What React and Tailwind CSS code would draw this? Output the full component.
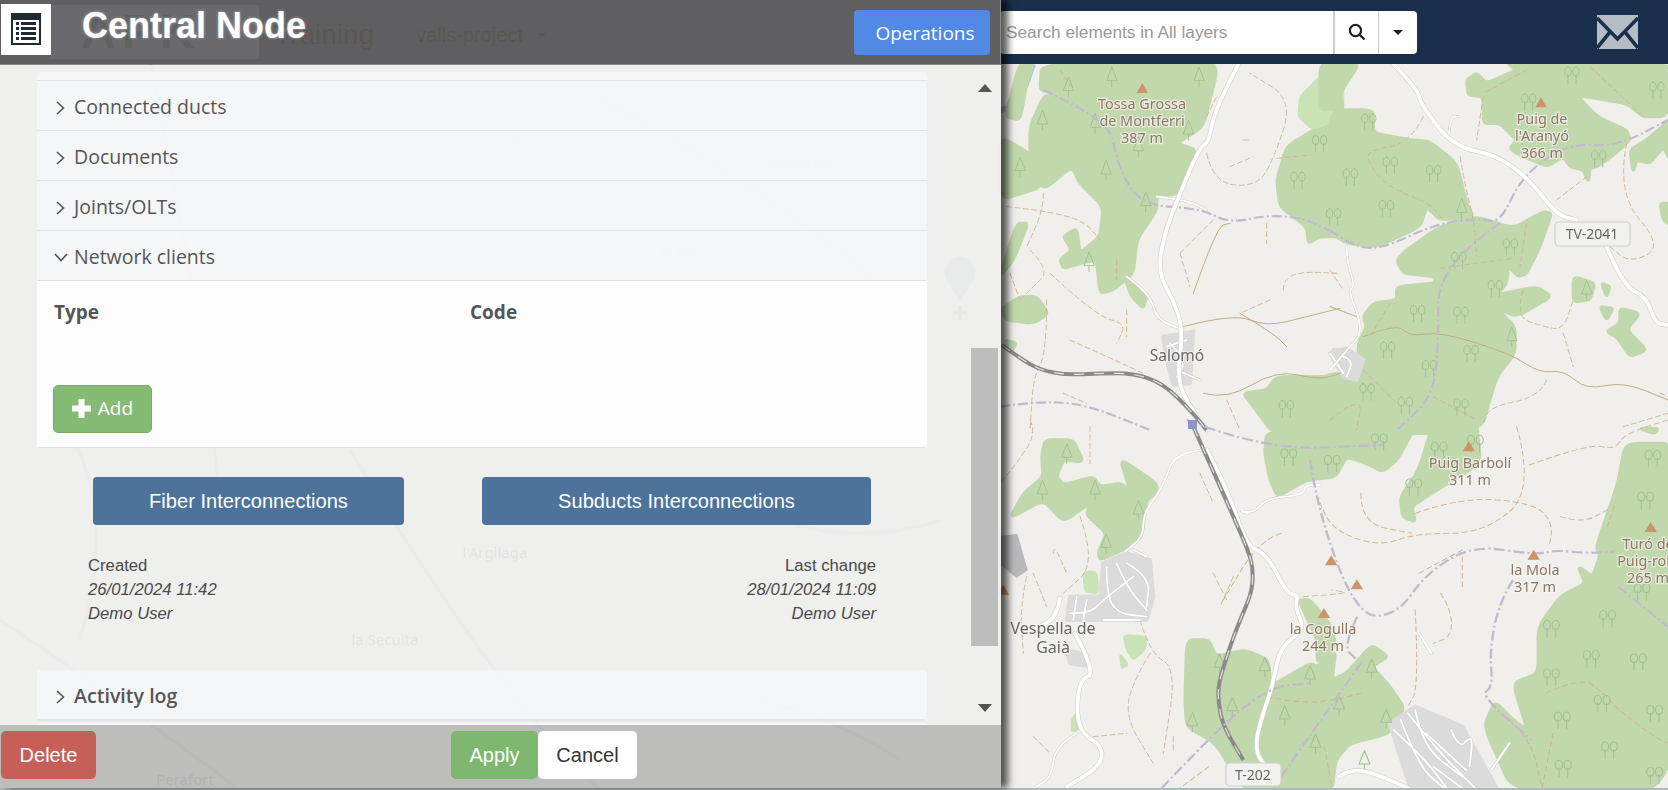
const FOREST = "#c1d8ad";

// map layers are traced per region, each view maps its own coordinates to the page
const views = [
  {
    t: "translate(1000 60) scale(0.3333)",
    forests: [
      "125,12 640,8 650,40 610,200 530,250 590,270 540,400 470,410 470,450 410,540 400,640 340,690 300,700 290,600 240,610 190,625 180,600 215,570 190,530 230,505 240,580 300,530 310,440 240,370 215,320 130,390 90,310 90,200 130,110 170,100 120,90",
      "60,8 100,8 80,70 60,180 15,170",
      "0,230 90,280 130,380 0,420",
      "50,490 85,490 40,600 0,650",
      "60,710 110,710 145,760 100,790 20,780 0,750",
      "15,840 50,850 30,880",
      "375,655 440,705 430,745 395,710",
      "940,210 1030,170 1030,530 960,530 925,550 920,500 840,440 830,360 860,260",
      "730,1000 800,990 830,950 1030,950 1030,1120 820,1120 760,1040",
    ],
    light: ["900,110 960,50 1030,10 1030,170 940,210 895,170"],
    built: ["490,830 580,815 570,970 520,975 500,900", "1000,870 1030,870 1030,920 1000,900"],
    tan: [
      "130,400 130,450 80,560", "20,440 120,450 250,480 300,540", "90,570 150,630 100,680 60,720",
      "150,640 290,770 380,790 350,850", "210,840 300,880 430,940", "140,720 140,880 100,950 90,1110",
      "620,280 640,370 770,380 820,300 880,120 750,40", "690,320 760,290", "730,240 745,240",
      "540,580 570,680", "640,480 540,580", "800,490 800,550", "850,690 850,660 900,635 1020,640",
      "810,720 720,760", "830,295 930,285", "620,170 650,110", "180,30 220,90", "350,600 350,660",
      "380,750 380,830", "190,1000 260,1030", "680,1020 720,1110", "30,640 60,720",
    ],
    brown: ["550,800 700,760 800,800 920,770 1020,745", "580,700 650,500 690,490", "610,1000 680,1020 830,930 960,960 1020,940", "720,760 820,820 860,860"],
    bounds: ["130,90 330,180 350,310 420,435 600,445 690,490 800,465 920,475 1020,530", "0,1040 100,1025 250,1030 450,1110"],
    roads: ["715,12 690,60 640,170 625,250 600,260 540,400 490,530 475,640 520,720 550,810 530,960 575,1050 620,1110"],
    lanes: ["380,650 450,700 470,780 550,810", "470,410 560,420 620,450", "500,860 560,840", "530,930 600,960", "510,850 560,900 530,950", "990,880 1030,940"],
    rail: ["5,855 60,895 120,930 200,945 300,940 400,940 490,970 580,1060 620,1110"],
    pines: [[335, 50], [205, 80], [127, 180], [60, 320], [318, 330], [285, 190], [565, 210], [597, 50], [437, 425], [267, 605], [415, 260]],
    trees: [[958, 250], [893, 360], [1000, 470], [858, 1045]],
    peaks: [[427, 85]],
  },
  {
    t: "translate(1330 60) scale(0.3333)",
    forests: [
      "0,150 130,150 130,220 245,240 300,245 380,310 410,430 430,470 330,480 290,440 270,500 140,560 50,550 -30,500",
      "-30,8 90,8 30,100 40,145 -30,150",
      "200,600 230,570 330,500 440,470 550,505 640,455 665,460 630,560 590,640 565,650 535,620 530,670 500,705 620,680 665,710 560,770 500,745 555,800 555,880 500,950 450,1120 -30,1120 -30,950 85,930 85,850 110,800 100,770 130,730 200,720 200,680 310,670 320,650 220,640",
      "410,60 440,40 470,70 560,30 530,8 1030,8 1030,130 1000,170 940,170 890,130 740,105 800,170 890,210 900,240 845,290 800,320 780,325 775,365 760,330 720,320 700,290 650,320 560,280 540,265 560,240 510,190 460,190 460,110 415,105",
      "900,270 950,240 1030,170 1030,320 1000,260 960,310 920,300 910,335",
      "730,650 795,670 780,720 730,725",
      "815,670 840,680 830,710",
      "810,740 850,745 830,780",
      "870,745 930,760 890,810 950,870 900,890 860,830 830,815 870,790",
      "990,430 1030,430 1030,500 1000,480",
    ],
    light: [],
    built: ["0,880 50,865 100,900 80,960 40,950"],
    tan: [
      "280,170 240,250 120,270 110,300 170,380 300,430 340,480", "390,290 410,400 430,470 440,590", "330,625 550,595",
      "460,110 440,240", "680,420 770,350", "890,250 860,400 1000,560 900,610 840,560", "590,30 460,100", "780,20 940,170",
      "580,690 555,770 640,800 700,810 730,720", "700,820 730,920", "650,960 630,1010 480,1040 460,1090", "100,930 200,1030",
      "0,1080 100,1000 80,1110", "180,730 120,830", "310,1010 440,1080", "880,1100 1014,1060", "590,490 570,620",
      "0,630 40,690", "990,1000 1014,1010",
    ],
    brown: ["100,830 200,790 240,830 330,815 540,880 630,940 700,930 770,990 880,965 1014,1020", "0,740 80,770"],
    bounds: [
      "0,510 60,555 150,570 320,490 450,475 510,490 575,350 710,250 860,260 1014,180",
      "510,490 325,615 325,850 310,1010 200,1110",
    ],
    roads: ["190,12 265,90 270,130 370,260 500,285 600,360 680,465 740,480", "830,560 880,680 950,710 975,790 1014,795"],
    lanes: ["355,240 360,170 385,170", "50,560 50,600 75,680 55,690 90,780 90,830 60,860", "60,860 0,930", "40,890 70,900 50,950"],
    rail: [],
    pines: [[395, 445], [545, 830], [770, 690]],
    trees: [[115, 185], [180, 315], [60, 350], [310, 340], [168, 445], [595, 125], [725, 45], [980, 90], [540, 560], [385, 600], [495, 685], [262, 760], [392, 765], [172, 870], [422, 880], [298, 925], [110, 995], [225, 1035], [392, 1040], [805, 295]],
    peaks: [[633, 128]],
  },
  {
    t: "translate(1000 420) scale(0.3333)",
    forests: [
      "135,60 220,60 250,125 190,120 170,170 190,195 280,170 300,200 360,190 390,210 360,115 470,190 470,220 440,240 425,350 390,380 300,420 295,395 320,340 260,285 270,250 190,305 130,240 30,295 70,220 130,170 125,110",
    ],
    light: ["250,455 290,455 295,520 255,515", "370,645 440,650 435,690 400,720 380,690", "360,700 385,735 365,745", "215,900 235,870 235,930 215,935"],
    built: ["310,430 380,400 450,420 460,530 440,600 330,600 200,600 210,530 300,530", "200,690 240,700 270,740 210,730"],
    grey: ["0,350 50,345 80,450 50,470 0,430"],
    tan: [
      "90,0 110,40 50,130 0,190", "240,290 290,430 190,520", "160,400 160,370 200,460", "100,460 140,560", "80,470 60,560 70,700",
      "420,600 450,700 530,745 490,1000", "450,700 390,800 380,900 460,1030", "640,460 680,540", "100,950 150,1000", "280,950 380,940",
      "600,160 640,250", "270,20 270,130", "700,470 660,560", "520,950 520,990",
    ],
    brown: [],
    bounds: [],
    roads: [
      "620,90 680,200 740,380 800,400 860,520 895,525 885,560 915,630 840,680 820,790 770,940 770,1000 790,1030",
      "225,640 290,760 235,780 230,930 310,980 300,1040 200,1100",
      "180,535 170,590 120,620",
    ],
    lanes: [
      "615,90 525,95 490,200 430,280 430,350 375,395", "745,280 710,270 760,280 800,235 910,225 915,195 960,195",
      "230,940 165,980 155,1070 110,1100",
      "320,440 320,520 350,580 440,590", "350,430 380,500 440,570", "400,390 440,410", "380,430 450,470 440,560",
      "210,580 270,580 310,540 400,470", "230,530 220,600", "260,540 250,600", "310,600 420,600",
    ],
    rail: ["580,20 660,200 745,390 760,450 755,520 720,600 690,680 655,790 655,850 670,920 730,1020"],
    pines: [[200, 100], [127, 210], [285, 210], [415, 270], [318, 370]],
    trees: [],
    peaks: [[10, 510]],
  },
  {
    t: "translate(1100 400) scale(0.3623 0.3333)",
    forests: [
      "1450,130 1590,130 1590,1175 1140,1175 1060,980 1090,905 1140,960 1180,990 1140,850 1210,820 1210,680 1270,590 1340,550 1320,500 1360,530 1380,470 1370,440 1430,250",
      "470,-10 1050,-10 1040,80 1050,190 900,290 860,320 870,365 835,350 830,290 880,210 920,70 880,60 820,180 780,215 735,190 680,170 650,230 570,240 490,290 470,240 455,160 460,100 560,85 640,60 500,-10",
      "240,720 300,720 320,770 400,750 465,780 470,860 580,790 600,800 650,750 640,840 680,820 750,735 795,770 750,800 800,860 840,925 800,1000 690,1030 650,1080 640,1175 400,1175 320,1030 240,980 235,900",
      "550,600 580,600 640,680 650,740 600,790 600,720 570,650",
      "1490,85 1540,85 1530,100",
    ],
    light: [],
    built: ["800,970 870,920 1000,980 1100,1175 860,1175"],
    tan: [
      "1185,195 1350,130 1420,150 1450,100 1568,60", "1150,80 1200,270 1060,400 870,400 770,440 640,390 600,290",
      "870,340 1000,290 1200,310 1250,370 1240,440", "1270,350 1330,370 1400,330", "720,280 720,370 860,400", "880,520 1000,450",
      "870,630 880,860 850,920", "940,580 970,630 970,710 920,730", "1130,960 1190,1020 1220,1165", "1230,880 1330,830 1390,880 1430,930 1530,1010 1568,1030",
      "460,890 550,910 650,900 720,880", "500,400 440,420 340,600", "560,590 700,580 640,570", "1000,470 1000,560", "1420,320 1400,380",
      "1250,1000 1220,1165", "620,1040 640,1165", "300,1100 220,1165",
    ],
    brown: [],
    bounds: [
      "240,60 450,150 780,135", "580,180 600,330 710,650 820,645 900,520 1030,435 1200,465 1260,450 1340,460 1420,455",
      "1140,540 1100,610 1075,760 1085,860 1050,885 1190,1020", "710,650 670,740 710,780", "500,1130 720,790",
      "170,1165 330,980 470,860 580,850", "1430,560 1568,680",
    ],
    roads: ["660,1130 700,1100 800,1140 850,1165"],
    lanes: [
      "880,700 915,760", "830,960 880,1100 950,1165", "870,930 890,1040 1000,1130", "970,990 990,1050 1030,1000 1020,1100",
      "920,1100 1000,1165", "1130,1030 1080,1110", "810,990 900,1080 960,1170", "850,940 930,1050 1040,1170", "900,1000 1010,1110",
    ],
    rail: [],
    pines: [[255, 965], [365, 920], [510, 945], [595, 1030], [730, 1080], [790, 955], [660, 915], [580, 825], [750, 805], [455, 800], [330, 790]],
    trees: [[1035, 130], [935, 150], [865, 260], [1525, 175], [1505, 300], [1400, 655], [1245, 685], [1355, 775], [1485, 785], [1245, 830], [1385, 910], [1275, 960], [1530, 940], [1405, 1050], [1278, 1105], [1530, 1125], [1495, 575], [640, 190], [520, 170], [770, 125]],
    peaks: [[1018, 140], [638, 482], [709, 554], [618, 640], [1197, 465], [1520, 382]],
  },
];

const labels = [
  { x: 1142, y: 109, s: "Tossa Grossa", peak: true },
  { x: 1142, y: 126, s: "de Montferri", peak: true },
  { x: 1142, y: 143, s: "387 m", peak: true },
  { x: 1177, y: 361, s: "Salomó", size: 15.5 },
  { x: 1542, y: 124, s: "Puig de", peak: true },
  { x: 1542, y: 141, s: "l'Aranyó", peak: true },
  { x: 1542, y: 158, s: "366 m", peak: true },
  { x: 1470, y: 468, s: "Puig Barbolí", peak: true },
  { x: 1470, y: 485, s: "311 m", peak: true },
  { x: 1535, y: 575, s: "la Mola", peak: true },
  { x: 1535, y: 592, s: "317 m", peak: true },
  { x: 1648, y: 549, s: "Turó de", peak: true },
  { x: 1648, y: 566, s: "Puig-roig", peak: true },
  { x: 1648, y: 583, s: "265 m", peak: true },
  { x: 1323, y: 634, s: "la Cogulla", peak: true },
  { x: 1323, y: 651, s: "244 m", peak: true },
  { x: 1053, y: 634, s: "Vespella de", size: 16 },
  { x: 1053, y: 653, s: "Gaià", size: 16 },
];

const ghostLabels = [
  { x: 527, y: 140, s: "Nulles" },
  { x: 800, y: 168, s: "Vilallonga" },
  { x: 680, y: 258, s: "El Pla" },
  { x: 135, y: 298, s: "T-223" },
  { x: 645, y: 412, s: "Renau" },
  { x: 523, y: 420, s: "TV-2032" },
  { x: 495, y: 558, s: "l'Argilaga" },
  { x: 385, y: 645, s: "la Secuita" },
  { x: 185, y: 785, s: "Perafort" },
];

const ghostLines = [
  "M0 620 Q120 700 240 790", "M150 64 Q200 300 220 500", "M600 100 Q760 180 900 300", "M350 450 Q500 700 600 790",
  "M760 700 Q840 720 900 760", "M60 420 Q120 500 80 640", "M420 280 Q480 380 620 420", "M700 480 Q820 560 940 520",
];

const toPoints = (str) => str.split(" ").map((s) => s.split(",").map(Number));

// open lines: quadratic curves through the midpoints
function smooth(str) {
  const p = toPoints(str);
  const mid = (a, b) => `${(a[0] + b[0]) / 2} ${(a[1] + b[1]) / 2}`;
  let d = `M${p[0][0]} ${p[0][1]}`;
  for (let i = 1; i < p.length - 1; i++) {
    d += ` Q${p[i][0]} ${p[i][1]} ${mid(p[i], p[i + 1])}`;
  }
  return d + ` L${p[p.length - 1][0]} ${p[p.length - 1][1]}`;
}

// closed shapes: only the corners get rounded, so they keep their area
function blob(str) {
  const p = toPoints(str);
  const at = (a, b, k) => `${a[0] + (b[0] - a[0]) * k} ${a[1] + (b[1] - a[1]) * k}`;
  let d = "";
  p.forEach((pt, i) => {
    const prev = p[(i + p.length - 1) % p.length];
    const next = p[(i + 1) % p.length];
    d += `${i ? "L" : "M"}${at(pt, prev, 0.25)} Q${pt[0]} ${pt[1]} ${at(pt, next, 0.25)} `;
  });
  return d + "Z";
}

function eachView(render) {
  return views.map((v, i) => (
    <g key={i} transform={v.t} strokeLinejoin="round" strokeLinecap="round" fill="none">
      {render(v)}
    </g>
  ));
}

function MapLayer() {
  return (
    <svg viewBox="0 64 1668 724" className="absolute inset-0 h-full w-full blur-[0.4px]">
      <rect x="0" y="64" width="1668" height="724" fill="#f1efec" />
      <g fill="none" stroke="#aaaaaa" strokeWidth="3">
        {ghostLines.map((d) => <path key={d} d={d} />)}
      </g>
      <path d="M1033 64 L1026 84 L1012 108 L1000 110" fill="none" stroke="#aac5da" strokeWidth="6" />
      {eachView((v) => (
        <>
          {v.forests.map((p, j) => <path key={j} d={blob(p)} fill={FOREST} stroke={FOREST} strokeWidth="10" />)}
          {v.light.map((p, j) => <path key={j} d={blob(p)} fill="#c9e2b6" stroke="#c9e2b6" strokeWidth="6" />)}
          {v.built.map((p, j) => <polygon key={j} points={p} fill="#dcdbdc" stroke="#dcdbdc" strokeWidth="12" />)}
          {(v.grey || []).map((p, j) => <polygon key={j} points={p} fill="#b9b9bb" stroke="#b9b9bb" strokeWidth="6" />)}
        </>
      ))}
      {eachView((v) => (
        <>
          {v.tan.map((p, j) => <path key={j} d={smooth(p)} stroke="#cdb58f" strokeWidth="2.8" strokeDasharray="15 10" />)}
          {v.brown.map((p, j) => <path key={j} d={smooth(p)} stroke="#c2ac82" strokeWidth="3" />)}
          {v.pines.map(([x, y], j) => (
            <path key={j} d={`M${x} ${y - 28} L${x - 15} ${y + 12} L${x + 15} ${y + 12} Z M${x} ${y + 12} V${y + 30}`} stroke="#a3c191" strokeWidth="3" />
          ))}
          {v.trees.map(([x, y], j) => (
            <path key={j} d={`M${x - 11} ${y + 26} V${y} M${x + 13} ${y + 26} V${y} M${x - 11} ${y - 24} a10 14 0 1 0 .1 0 Z M${x + 13} ${y - 24} a10 14 0 1 0 .1 0 Z`} stroke="#a3c191" strokeWidth="3" />
          ))}
        </>
      ))}
      {eachView((v) => (
        <>
          {v.bounds.map((p, j) => <path key={j} d={smooth(p)} stroke="#c0b9cf" strokeWidth="6.5" strokeDasharray="30 9 6 9" strokeLinecap="butt" />)}
          {v.lanes.map((p, j) => <path key={j} d={smooth(p)} stroke="#cfccc8" strokeWidth="8" />)}
          {v.lanes.map((p, j) => <path key={j} d={smooth(p)} stroke="#ffffff" strokeWidth="5.5" />)}
          {v.roads.map((p, j) => <path key={j} d={smooth(p)} stroke="#d3cfca" strokeWidth="15" />)}
          {v.roads.map((p, j) => <path key={j} d={smooth(p)} stroke="#ffffff" strokeWidth="11.5" />)}
          {v.rail.map((p, j) => <path key={j} d={smooth(p)} stroke="#8a8a8a" strokeWidth="12" strokeLinecap="butt" />)}
          {v.rail.map((p, j) => <path key={j} d={smooth(p)} stroke="#e6e6e6" strokeWidth="3.5" strokeDasharray="30 30" strokeLinecap="butt" />)}
          {v.peaks.map(([x, y], j) => (
            <polygon key={j} points={`${x},${y - 16} ${x - 17},${y + 14} ${x + 17},${y + 14}`} fill="#cc9468" />
          ))}
        </>
      ))}
      <rect x="1188" y="420" width="9" height="9" fill="#8d94c8" />
      <path d="M960 257 C950 257 944 266 945 275 C947 284 956 292 960 302 C964 292 973 284 975 275 C976 266 970 257 960 257 Z" fill="#7f9fc6" />
      <path d="M960 306 V320 M953 313 H967" stroke="#666666" strokeWidth="3" />
      <g className="font-['Noto_Sans',sans-serif]" textAnchor="middle">
        {labels.map((l) => (
          <text
            key={l.s + l.x}
            x={l.x}
            y={l.y}
            fontSize={l.size || 14.4}
            fill={l.peak ? "#8b7763" : "#666666"}
            stroke="#f5f3f0"
            strokeWidth="2.5"
            paintOrder="stroke"
            strokeOpacity="0.75"
          >
            {l.s}
          </text>
        ))}
        {ghostLabels.map((l) => (
          <text key={l.s} x={l.x} y={l.y} fontSize="15" fill="#222222">{l.s}</text>
        ))}
      </g>
      <g className="font-['Noto_Sans',sans-serif]" textAnchor="middle" fontSize="14" fill="#666666">
        <rect x="1555" y="222" width="75" height="24" rx="4" fill="#f1f1f0" stroke="#cfcfcf" strokeWidth="1.2" />
        <text x="1592" y="239">TV-2041</text>
        <rect x="1226" y="763" width="55" height="23" rx="4" fill="#f1f1f0" stroke="#cfcfcf" strokeWidth="1.2" />
        <text x="1253" y="780">T-202</text>
      </g>
    </svg>
  );
}

function Chevron({ open }) {
  return open ? (
    <svg width="14" height="9" viewBox="0 0 14 9" className="absolute left-[17px] top-[22px]" fill="none" stroke="#555555" strokeWidth="1.6">
      <path d="M1 1 L7 7.5 L13 1" />
    </svg>
  ) : (
    <svg width="9" height="14" viewBox="0 0 9 14" className="absolute left-[19px] top-[20px]" fill="none" stroke="#555555" strokeWidth="1.6">
      <path d="M1 1 L7.5 7 L1 13" />
    </svg>
  );
}

function AccordionRow({ title, open, medium }) {
  return (
    <div className={`relative flex h-[50px] items-center border-b border-[#e1e3e6] bg-[#f5f6f8]/90 pl-[37px] pt-[2px] font-['Open_Sans',sans-serif] text-[#555555] ${medium ? "text-[19.6px] font-semibold" : "text-[19.5px] font-medium"}`}>
      <Chevron open={open} />
      {title}
    </div>
  );
}

function ListIcon() {
  return (
    <svg width="30" height="32" viewBox="0 0 30 32">
      <rect width="30" height="32" fill="#1f2a33" />
      <rect x="2" y="7" width="26" height="23" fill="#ffffff" />
      <g fill="#1f2a33">
        <rect x="5" y="9" width="3" height="3" />
        <rect x="5" y="14" width="3" height="3" />
        <rect x="5" y="19" width="3" height="3" />
        <rect x="5" y="24" width="3" height="3" />
        <rect x="10" y="9" width="15" height="3" />
        <rect x="10" y="14" width="15" height="3" />
        <rect x="10" y="19" width="15" height="3" />
        <rect x="10" y="24" width="15" height="3" />
      </g>
    </svg>
  );
}

function Navbar() {
  return (
    <div className="flex h-16 shrink-0 items-center bg-[#1a2f4b] font-['Liberation_Sans',sans-serif]">
      <div className="ml-[51px] flex h-[54px] w-[208px] items-center bg-[#50648a] pl-[30px] text-[48px] font-bold leading-none tracking-[6px] text-[#2a3a50]">APK</div>
      <span className="ml-[15px] mt-[6px] text-[28px] text-black">Training</span>
      <span className="ml-[42px] mt-[6px] text-[20px] text-black">valls-project</span>
      <div className="ml-[15px] mt-[6px] h-0 w-0 border-x-[4px] border-t-[4px] border-x-transparent border-t-black" />
      <div className="ml-auto flex h-[43px] w-[417px] items-stretch overflow-hidden rounded-[4px] bg-white">
        <div className="flex flex-1 items-center pl-[6px] pt-[2px] text-[17.25px] text-[#999999]">Search elements in All layers</div>
        <div className="flex w-[45px] items-center justify-center border-l-2 border-[#cccccc]">
          <svg width="18" height="18" viewBox="0 0 18 18" fill="none" stroke="#222222" strokeWidth="2.2">
            <circle cx="7.5" cy="7.5" r="5.6" />
            <path d="M11.6 11.6 L16.5 16.5" />
          </svg>
        </div>
        <div className="flex w-[39px] items-center justify-center border-l border-[#cccccc]">
          <div className="h-0 w-0 border-x-[5px] border-t-[5px] border-x-transparent border-t-[#222222]" />
        </div>
      </div>
      <svg width="41" height="34" viewBox="0 0 41 34" className="ml-[180px] mr-[30px]">
        <rect width="41" height="34" fill="#b4bcc5" />
        <path d="M0 3 L20.5 24 L41 3 M0 33 L13 17 M41 33 L28 17" fill="none" stroke="#1a2f4b" strokeWidth="3.6" />
      </svg>
    </div>
  );
}

function DetailsPanel() {
  return (
    <div className="absolute left-0 top-0 flex h-[788px] w-[1001px] flex-col shadow-[7px_0_7px_rgba(0,0,0,0.65)]">
      <div className="flex h-[65px] shrink-0 items-center border-r border-[#8b8b8b] bg-[#706c66]/80 font-['Liberation_Sans',sans-serif]">
        <div className="mb-[7px] ml-px flex h-[51px] w-[50px] items-center justify-center bg-white">
          <ListIcon />
        </div>
        <h1 className="mb-[14px] ml-[31px] text-[36px] font-bold text-white [text-shadow:0_0_3px_rgba(255,255,255,0.5)]">Central Node</h1>
        <button className="ml-auto mr-[10px] flex h-[45px] w-[136px] items-center justify-center rounded-[4px] bg-[#5289e4] pl-[6px] pt-[2px] font-['Open_Sans',sans-serif] text-[19px] text-white">
          Operations
        </button>
      </div>

      <div className="flex min-h-0 flex-1 bg-[#eeeeee]/95">
        <div className="min-w-0 flex-1 overflow-hidden pl-[37px] pt-[7px]">
          <div className="w-[890px] overflow-hidden rounded-[4px]">
            <div className="h-[9px] border-b border-[#e1e3e6] bg-[#f5f6f8]/90" />
            <AccordionRow title="Connected ducts" />
            <AccordionRow title="Documents" />
            <AccordionRow title="Joints/OLTs" />
            <AccordionRow title="Network clients" open />
            <div className="h-[167px] border-b border-[#e3e3e3] bg-white/90 pl-[17px] pt-[17px] font-['Open_Sans',sans-serif] text-[19px] font-bold text-[#555555]">
              <div className="grid grid-cols-[416px_1fr]">
                <span>Type</span>
                <span>Code</span>
              </div>
              <button className="-ml-px mt-[58px] flex h-[48px] w-[99px] items-center justify-center gap-[7px] rounded-[5px] border border-[#78ad66] bg-[#85bb74] text-[19px] font-normal text-white">
                <svg width="19" height="19" viewBox="0 0 19 19" fill="#ffffff">
                  <path d="M6.5 0 H12.5 V6.5 H19 V12.5 H12.5 V19 H6.5 V12.5 H0 V6.5 H6.5 Z" />
                </svg>
                Add
              </button>
            </div>
          </div>

          <div className="ml-[56px] mt-[29px] flex gap-[78px] font-['Liberation_Sans',sans-serif] text-[20.1px] text-white">
            <button className="h-[48px] w-[311px] rounded-[4px] bg-[#4d739b]">Fiber Interconnections</button>
            <button className="h-[48px] w-[389px] rounded-[4px] bg-[#4d739b]">Subducts Interconnections</button>
          </div>

          <div className="ml-[51px] mt-[29px] flex w-[788px] justify-between font-['Liberation_Sans',sans-serif] text-[16.7px] leading-6 text-[#4a4a4a]">
            <div>
              <p>Created</p>
              <p className="italic">26/01/2024 11:42</p>
              <p className="italic">Demo User</p>
            </div>
            <div className="text-right">
              <p>Last change</p>
              <p className="italic">28/01/2024 11:09</p>
              <p className="italic">Demo User</p>
            </div>
          </div>

          <div className="mt-[44px] w-[890px] overflow-hidden rounded-[4px] border-b border-[#e1e3e6]">
            <AccordionRow title="Activity log" medium />
          </div>
          <div className="mt-[2px] h-4 w-[890px] rounded-t-[4px] bg-[#f5f6f8]/90" />
        </div>

        <div className="flex w-[30px] shrink-0 flex-col items-center pr-[3px] pt-[19px]">
          <div className="h-0 w-0 border-x-[7px] border-b-[8px] border-x-transparent border-b-[#555555]" />
          <div className="mt-[256px] h-[298px] w-full shrink-0 bg-[#bdbdbd]" />
          <div className="mt-[58px] h-0 w-0 border-x-[7px] border-t-[8px] border-x-transparent border-t-[#555555]" />
        </div>
      </div>

      <div className="flex h-[63px] shrink-0 items-start bg-[#b9b9b9]/95 pt-[6px] font-['Liberation_Sans',sans-serif] text-[20px]">
        <button className="ml-px h-[48px] w-[95px] rounded-[5px] bg-[#c65f58] text-white">Delete</button>
        <button className="ml-[355px] h-[48px] w-[87px] rounded-[5px] bg-[#7db86e] text-white">Apply</button>
        <button className="h-[48px] w-[99px] rounded-[5px] bg-white text-[#333333]">Cancel</button>
      </div>
    </div>
  );
}

export default function App() {
  return (
    <div className="relative flex h-[790px] w-[1668px] flex-col overflow-hidden bg-[#aebcbc]">
      <Navbar />
      <div className="relative h-[724px] shrink-0">
        <MapLayer />
      </div>
      <DetailsPanel />
    </div>
  );
}
